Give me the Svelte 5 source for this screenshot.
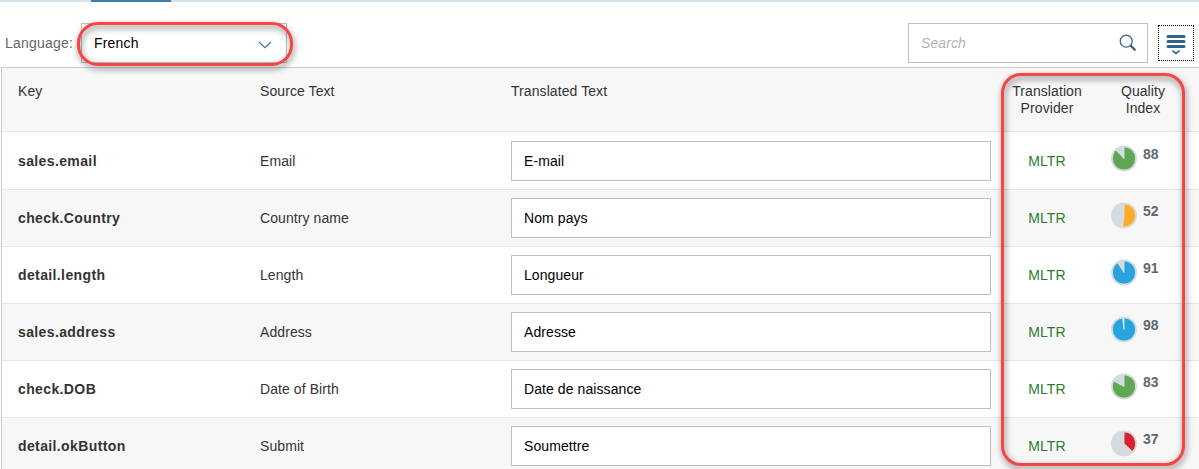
<script>
  const rows = [
    { key: 'sales.email', source: 'Email', text: 'E-mail', score: 88, color: '#61a656' },
    { key: 'check.Country', source: 'Country name', text: 'Nom pays', score: 52, color: '#faac2b' },
    { key: 'detail.length', source: 'Length', text: 'Longueur', score: 91, color: '#27a3dd' },
    { key: 'sales.address', source: 'Address', text: 'Adresse', score: 98, color: '#27a3dd' },
    { key: 'check.DOB', source: 'Date of Birth', text: 'Date de naissance', score: 83, color: '#61a656' },
    { key: 'detail.okButton', source: 'Submit', text: 'Soumettre', score: 37, color: '#d9202f' }
  ];

  // Pie slice starting at twelve o'clock and running clockwise
  function slice(score) {
    const angle = (score / 100) * Math.PI * 2;
    const r = 11.6;
    const x = 13 + r * Math.sin(angle);
    const y = 13 - r * Math.cos(angle);
    return `M13 13V${13 - r}A${r} ${r} 0 ${score > 50 ? 1 : 0} 1 ${x} ${y}Z`;
  }
</script>

<div class="page">
  <div class="tabs"><div class="active"></div></div>

  <div class="toolbar">
    <span class="label">Language:</span>
    <div class="select">
      <span>French</span>
      <svg width="14" height="8" viewBox="0 0 14 8"><path d="M1 1L7 6.7L13 1" fill="none" stroke="#4a6e9c" stroke-width="1.1" /></svg>
    </div>
    <div class="search">
      <span>Search</span>
      <svg width="18" height="18" viewBox="0 0 18 18" fill="none" stroke="#346187">
        <circle cx="7.2" cy="7.2" r="6" stroke-width="1.2" />
        <path d="M11.5 11.5L16.4 16.4" stroke-width="2.2" />
      </svg>
    </div>
    <div class="menu">
      <svg width="20" height="21" viewBox="0 0 20 21" fill="none" stroke="#346187">
        <path d="M2 2.5H18M2 7.5H18M2 12.5H18" stroke-width="3" stroke-linecap="round" />
        <path d="M6.3 16.6L10 19.4L13.7 16.6" stroke-width="1.6" />
      </svg>
    </div>
    <div class="highlight language"></div>
  </div>

  <div class="table">
    <div class="row head">
      <div>Key</div>
      <div>Source Text</div>
      <div>Translated Text</div>
      <div class="center">Translation<br />Provider</div>
      <div class="center">Quality<br />Index</div>
    </div>
    {#each rows as row}
      <div class="row item">
        <div class="key">{row.key}</div>
        <div>{row.source}</div>
        <div class="field">{row.text}</div>
        <div class="center provider">MLTR</div>
        <div class="quality">
          <svg width="26" height="27" viewBox="0 0 26 27">
            <circle cx="13" cy="13.5" r="13" fill="#d5dadd" />
            <path transform="translate(0 .5)" d={slice(row.score)} fill={row.color} stroke="#dfe8e5" stroke-width="0.8" />
          </svg>
          <b>{row.score}</b>
        </div>
      </div>
    {/each}
    <div class="highlight scores"></div>
  </div>
</div>

<style>
  :global(body) {
    background: #fff;
    overflow: hidden;
  }
  .page {
    box-sizing: border-box;
    width: 1199px;
    height: 469px;
    overflow: hidden;
    font: 14px/17px "Liberation Sans", Arial, sans-serif;
    letter-spacing: 0.08px;
    color: #333;
  }
  .page * {
    box-sizing: border-box;
  }
  .tabs {
    height: 2px;
    padding-left: 91px;
    background: #d1e0ee;
  }
  .active {
    width: 80px;
    height: 2px;
    background: #427cac;
  }
  .toolbar {
    position: relative;
    display: flex;
    align-items: flex-start;
    height: 65px;
    padding: 21px 5px 0;
  }
  .label {
    width: 76px;
    line-height: 40px;
    letter-spacing: 0.2px;
    color: #666;
  }
  .select,
  .search {
    display: flex;
    align-items: center;
    justify-content: space-between;
    height: 40px;
    border: 1px solid #bfbfbf;
    background: #fff;
  }
  .select {
    width: 206px;
    padding: 0 14px 0 12px;
    color: #000;
    letter-spacing: 0.2px;
  }
  .select svg {
    margin-top: 3px;
  }
  .search {
    width: 240px;
    margin-left: auto;
    padding: 0 10px 0 12px;
    color: #b3b3b3;
    font-style: italic;
  }
  .menu {
    display: flex;
    justify-content: center;
    width: 36px;
    height: 36px;
    margin: 2px 0 0 10px;
    padding-top: 8px;
    border: 1px dotted #000;
  }
  .table {
    position: relative;
    height: 402px;
    margin-left: 1px;
    border: solid #ccc;
    border-width: 1px 0 0 1px;
  }
  .row {
    display: grid;
    grid-template-columns: 242px 251px 480px 112px 80px;
    height: 57px;
    padding-left: 16px;
    align-items: center;
    border-bottom: 1px solid #e5e5e5;
    background: #fff;
  }
  .row.head {
    height: 64px;
    padding-top: 15px;
    align-items: start;
    background: #f7f7f7;
  }
  .head + .item {
    height: 58px;
    padding-top: 1px;
  }
  .item:nth-child(odd) {
    background: #f7f7f7;
  }
  .center {
    text-align: center;
  }
  .item > div {
    padding-top: 1px;
  }
  .key {
    font-weight: bold;
    letter-spacing: 0.38px;
  }
  .item .field {
    height: 40px;
    padding: 0 12px;
    border: 1px solid #bfbfbf;
    background: #fff;
    color: #000;
    line-height: 38px;
  }
  .item .provider {
    color: #2b7c2b;
  }
  .item .quality {
    display: flex;
    gap: 6px;
    height: 32px;
    padding: 0 0 0 8px;
  }
  .quality b {
    color: #5f696e;
    line-height: 19px;
  }
  .highlight {
    position: absolute;
    border: 3px solid #fa4343;
    filter: drop-shadow(1px 3px 3px rgba(0, 0, 0, 0.55));
  }
  .language {
    left: 77px;
    top: 20px;
    width: 216px;
    height: 44px;
    border-radius: 21px;
    z-index: 1;
  }
  .scores {
    left: 999px;
    top: 5px;
    width: 184px;
    height: 393px;
    border-radius: 20px;
  }
</style>
